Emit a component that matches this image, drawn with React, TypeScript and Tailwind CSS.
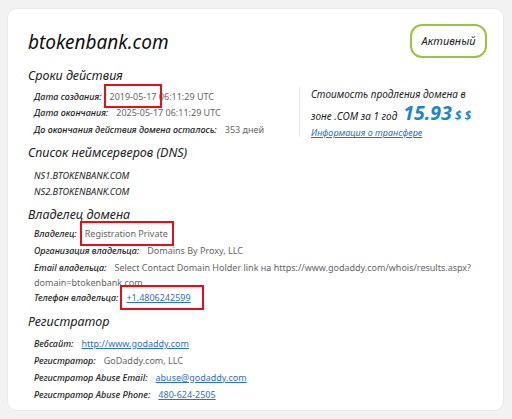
import React from "react";

const ital = "font-['Noto_Sans',sans-serif] italic";
const body = "font-['Noto_Sans',sans-serif]";

function Row({ label, children }: { label: string; children: React.ReactNode }) {
  return (
    <div className="flex items-center h-[16.8px] whitespace-nowrap">
      <span className={`${ital} text-[9px] text-[#1e1e1e] font-medium`}>{label}</span>
      <span className={`${body} text-[9px] text-[#666] ml-[8px]`}>{children}</span>
    </div>
  );
}

// красная рамка-пометка поверх значения
function Marked({ box, children }: { box: string; children: React.ReactNode }) {
  return (
    <span className="relative">
      {children}
      <span className={`absolute border-2 border-[#e3101c] pointer-events-none ${box}`} />
    </span>
  );
}

function Link({ children }: { children: React.ReactNode }) {
  return <span className="text-[#2f6fc2] underline">{children}</span>;
}

export default function App() {
  return (
    <div className="w-[512px] h-[419px] bg-[#f2f2f2] pt-[8px] pl-[7px]">
      <div className="w-[497px] h-[403px] bg-white rounded-[10px] border border-[#ebebeb] pl-[20px] pr-[16px] pt-[15px]">
        {/* шапка */}
        <div className="flex items-start justify-between">
          <h1 className={`${ital} text-[19px] text-[#111] mt-[5px] leading-[26px]`}>btokenbank.com</h1>
          <div className="border-2 border-[#9cc43c] rounded-[12px] w-[77px] h-[34px] flex items-center justify-center">
            <span className={`${ital} text-[11px] text-[#222]`}>Активный</span>
          </div>
        </div>

        {/* Сроки действия */}
        <h2 className={`${ital} text-[12.5px] text-[#222] leading-[20px] mt-[8px]`}>Сроки действия</h2>
        <div className="flex mt-[2px]">
          <div className="pl-[6px] w-[271px]">
            <Row label="Дата создания:">
              <Marked box="-left-[6px] -right-[5px] -top-[6px] -bottom-[5px]">2019-05-17</Marked> 06:11:29 UTC
            </Row>
            <Row label="Дата окончания:">2025-05-17 06:11:29 UTC</Row>
            <Row label="До окончания действия домена осталось:">353 дней</Row>
          </div>
          <div className="border-l border-[#e8e8e8] pl-[11px] h-[50px] mt-[-1px]">
            <div className={`${ital} text-[10px] text-[#222] leading-[14px]`}>Стоимость продления домена в</div>
            <div className={`${ital} text-[10px] text-[#222] flex items-baseline leading-[22px] whitespace-nowrap mt-[1px]`}>
              зоне .COM за 1 год
              <span className="text-[19.5px] font-bold text-[#1c86c8] ml-[6px] leading-[22px]">15.93</span>
              <span className="text-[12px] font-bold text-[#1c86c8] ml-[3px]">$ $</span>
            </div>
            <div className={`${ital} text-[9px] text-[#2f6fc2] underline leading-[12px]`}>Информация о трансфере</div>
          </div>
        </div>

        {/* DNS */}
        <h2 className={`${ital} text-[12.5px] text-[#222] leading-[20px] mt-[5px]`}>Список неймсерверов (DNS)</h2>
        <div className={`${ital} text-[9.2px] text-[#222] pl-[6px] mt-[5px] leading-[16px]`}>
          <div>NS1.BTOKENBANK.COM</div>
          <div>NS2.BTOKENBANK.COM</div>
        </div>

        {/* Владелец */}
        <h2 className={`${ital} text-[12.5px] text-[#222] leading-[20px] mt-[5px]`}>Владелец домена</h2>
        <div className="pl-[6px] mt-[0px]">
          <Row label="Владелец:">
            <Marked box="-left-[5px] -right-[6px] -top-[6px] -bottom-[6px]">Registration Private</Marked>
          </Row>
          <Row label="Организация владельца:">Domains By Proxy, LLC</Row>
          <Row label="Email владельца:">Select Contact Domain Holder link на https://www.godaddy.com/whois/results.aspx?</Row>
          <div className={`${body} text-[9px] text-[#666] h-[14px] leading-[14px]`}>domain=btokenbank.com</div>
          <Row label="Телефон владельца:">
            <Marked box="-left-[6px] -right-[13px] -top-[6px] -bottom-[6px]"><Link>+1.4806242599</Link></Marked>
          </Row>
        </div>

        {/* Регистратор */}
        <h2 className={`${ital} text-[12.5px] text-[#222] leading-[20px] mt-[5px]`}>Регистратор</h2>
        <div className="pl-[6px] mt-[4px]">
          <Row label="Вебсайт:"><Link>http://www.godaddy.com</Link></Row>
          <Row label="Регистратор:">GoDaddy.com, LLC</Row>
          <Row label="Регистратор Abuse Email:"><Link>abuse@godaddy.com</Link></Row>
          <Row label="Регистратор Abuse Phone:"><Link>480-624-2505</Link></Row>
        </div>
      </div>
    </div>
  );
}
